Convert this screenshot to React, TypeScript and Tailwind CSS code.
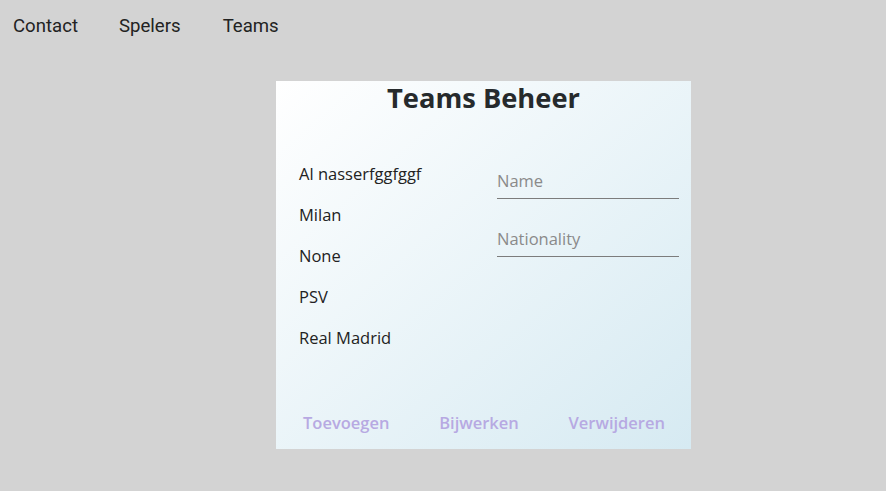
import React from "react";

const teams = ["Al nasserfggfggf", "Milan", "None", "PSV", "Real Madrid"];

export default function App() {
  return (
    <div className="min-h-[491px] w-full bg-[#d3d3d3]">
      <nav className="flex h-[50px] items-center pl-[13px] pt-[4px] text-[18.6px] text-[#222] [font-family:Roboto,sans-serif]">
        <span>Contact</span>
        <span className="ml-[41px]">Spelers</span>
        <span className="ml-[42px]">Teams</span>
      </nav>
      <div className="ml-[276px] mt-[31px] flex h-[368px] w-[415px] flex-col bg-gradient-to-br from-white to-[#d6eaf2] [font-family:'Open_Sans',sans-serif]">
        <h1 className="pt-[1px] text-center text-[27.3px] font-bold leading-[32px] text-[#262a2c]">
          Teams Beheer
        </h1>
        <div className="mt-[28px] flex">
          <ul className="flex w-[221px] flex-col gap-[17px] pl-[23px] pt-[20px] text-[16.5px] leading-[24px] text-[#222]">
            {teams.map((t) => (
              <li key={t}>{t}</li>
            ))}
          </ul>
          <div className="flex w-[182px] flex-col gap-[28px] pt-[27px]">
            <div className="border-b-[1.5px] border-[#7c7c7c] pb-[5px] text-[16.5px] leading-[24px] text-[#8a8a8a]">
              Name
            </div>
            <div className="border-b-[1.5px] border-[#7c7c7c] pb-[5px] text-[16.5px] leading-[24px] text-[#8a8a8a]">
              Nationality
            </div>
          </div>
        </div>
        <div className="mt-auto flex justify-between pl-[27px] pr-[26px] pb-[14px] text-[16.5px] font-semibold leading-[24px] text-[#b7a9e2]">
          <span>Toevoegen</span>
          <span>Bijwerken</span>
          <span>Verwijderen</span>
        </div>
      </div>
    </div>
  );
}
